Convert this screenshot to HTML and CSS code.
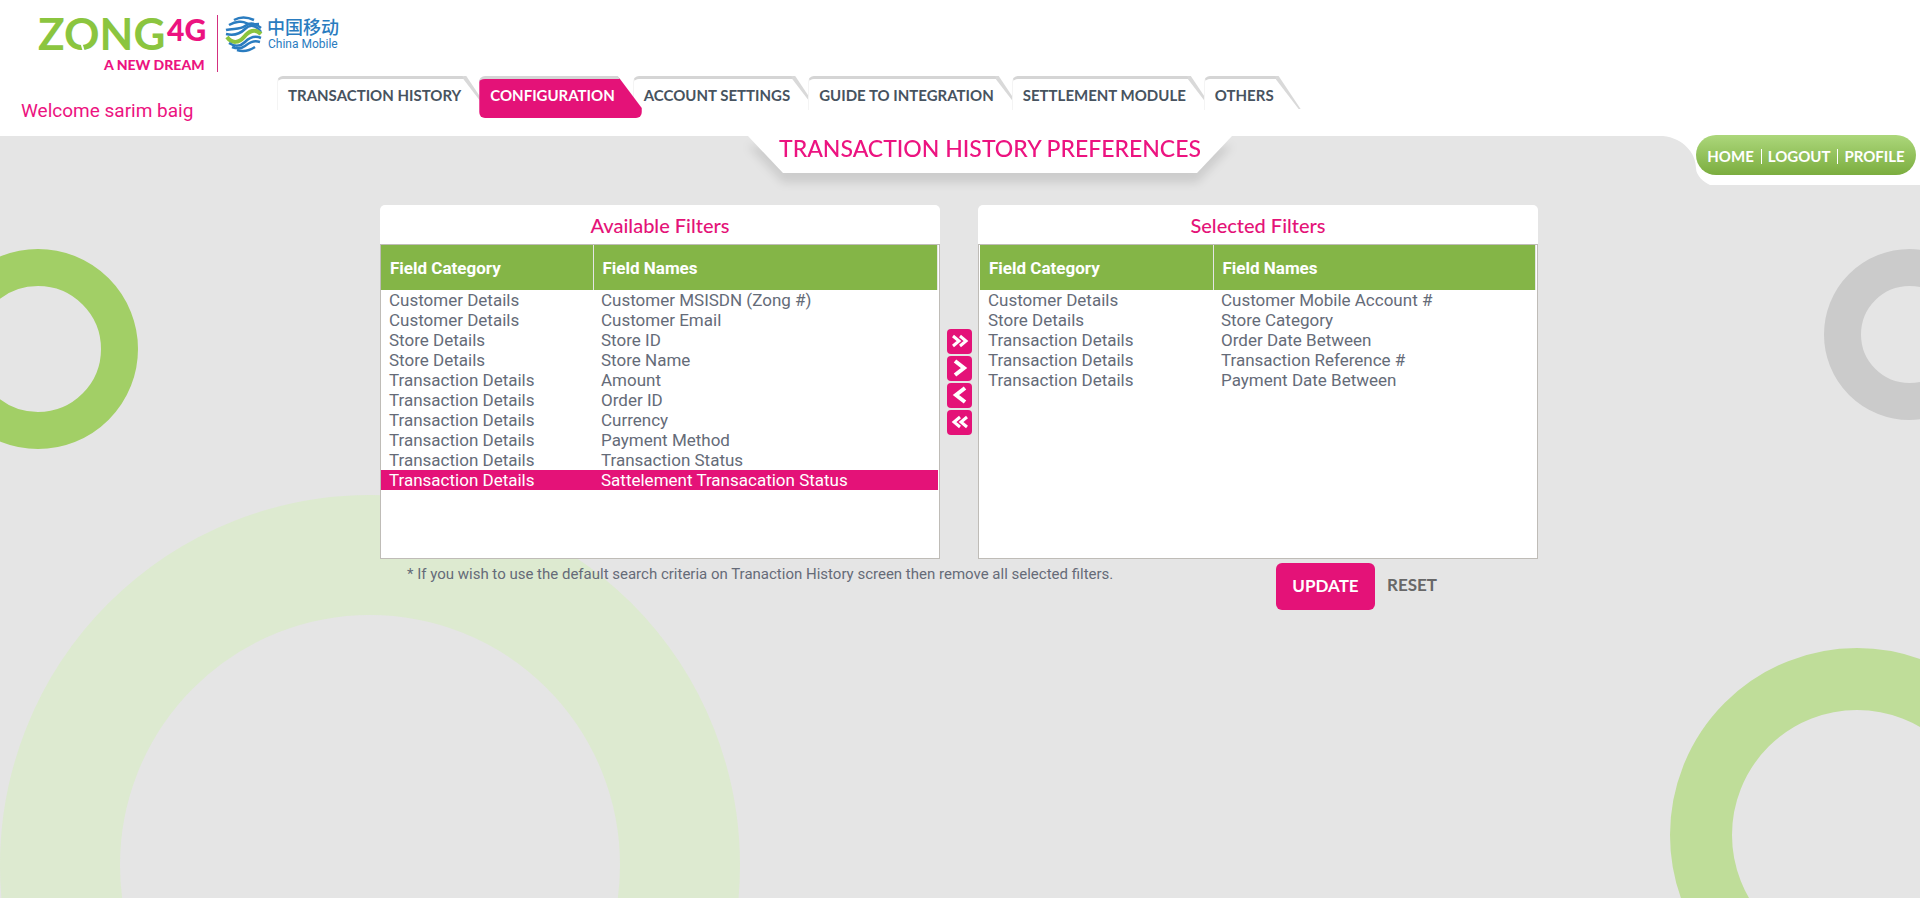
FILE: index.html
```html
<!DOCTYPE html>
<html lang="en">
<head>
<meta charset="utf-8">
<title>Transaction History Preferences</title>
<link rel="stylesheet" href="styles.css">
</head>
<body>
<header class="header">
  <div class="brand">
    <svg class="logo" width="330" height="80" viewBox="0 0 330 80" role="img" aria-label="Zong 4G, A New Dream, China Mobile">
      <text class="logo-zong" x="28" y="50" font-size="44">ZONG</text>
      <path d="M71 42l3 10" stroke="#fff" stroke-width="2"/>
      <text class="logo-pink" x="157" y="41" font-size="30">4G</text>
      <text class="logo-pink" x="94" y="70" font-size="14">A NEW DREAM</text>
      <path d="M207.500 15v57" stroke="#d3307f" stroke-width="1"/>
      <g fill="none" stroke-width="2.500">
        <path stroke="#2a7cc0" d="M224 20q9-5 20 0"/>
        <path stroke="#2a7cc0" d="M219 25c7-4 14-4 17-2s8 1 13 1"/>
        <path stroke="#2a7cc0" d="M216 30c7-2 14 0 19-4s10-3 16 2"/>
        <path stroke="#2a7cc0" d="M216 34c8 2 14 0 19-5s11-4 16 3"/>
        <path stroke="#8bc43f" stroke-width="4" d="M217 37c5 7 12 6 17 0s11-9 17-3"/>
        <path stroke="#2a7cc0" d="M251 38c-7-3-12 0-16 4s-10 5-16 1M250 42c-7-2-11 1-15 4s-8 3-13 1M245 47c-6 4-12 5-18 3"/>
      </g>
      <text class="logo-cn" x="257" y="34" font-size="18">中国移动</text>
      <text class="logo-blue" x="258" y="48" font-size="12">China Mobile</text>
    </svg>
    <p class="welcome">Welcome sarim baig</p>
  </div>
  <nav class="tabs" aria-label="Main">
    <a class="tab" href="#">TRANSACTION HISTORY</a>
    <a class="tab tab-active" href="#" aria-current="page">CONFIGURATION</a>
    <a class="tab" href="#">ACCOUNT SETTINGS</a>
    <a class="tab" href="#">GUIDE TO INTEGRATION</a>
    <a class="tab" href="#">SETTLEMENT MODULE</a>
    <a class="tab" href="#">OTHERS</a>
  </nav>
</header>
<main class="main">
  <div class="rings" aria-hidden="true">
    <span class="ring ring-left"></span>
    <span class="ring ring-big"></span>
    <span class="ring ring-grey"></span>
    <span class="ring ring-corner"></span>
  </div>
  <div class="title-wrap"><h1 class="title">TRANSACTION HISTORY PREFERENCES</h1></div>
  <div class="user">
    <svg class="user-shape" width="257" height="49" viewBox="0 0 257 49" aria-hidden="true"><path fill="#fff" d="M0 0C20 2 33 17 33 32C33 40 41 46 47 49H257V0Z"/></svg>
    <nav class="user-nav" aria-label="Account">
      <a href="#">HOME</a><a href="#">LOGOUT</a><a href="#">PROFILE</a>
    </nav>
  </div>
  <form class="filters">
    <section class="panel">
      <h2 class="panel-title">Available Filters</h2>
      <div class="panel-body">
        <table class="grid">
          <colgroup><col class="col-a"><col></colgroup>
          <thead><tr><th scope="col">Field Category</th><th scope="col">Field Names</th></tr></thead>
          <tbody>
            <tr><td>Customer Details</td><td>Customer MSISDN (Zong #)</td></tr>
            <tr><td>Customer Details</td><td>Customer Email</td></tr>
            <tr><td>Store Details</td><td>Store ID</td></tr>
            <tr><td>Store Details</td><td>Store Name</td></tr>
            <tr><td>Transaction Details</td><td>Amount</td></tr>
            <tr><td>Transaction Details</td><td>Order ID</td></tr>
            <tr><td>Transaction Details</td><td>Currency</td></tr>
            <tr><td>Transaction Details</td><td>Payment Method</td></tr>
            <tr><td>Transaction Details</td><td>Transaction Status</td></tr>
            <tr class="chosen"><td>Transaction Details</td><td>Sattelement Transacation Status</td></tr>
          </tbody>
        </table>
      </div>
    </section>
    <div class="movers">
      <button type="button" class="mover" aria-label="Add all"><svg width="25" height="25" viewBox="0 0 25 25"><path d="M6 7l6 5-6 5M13 7l6 5-6 5"/></svg></button>
      <button type="button" class="mover" aria-label="Add"><svg width="25" height="25" viewBox="0 0 25 25"><path class="thick" d="M8 5l9 7-9 7"/></svg></button>
      <button type="button" class="mover" aria-label="Remove"><svg width="25" height="25" viewBox="0 0 25 25"><path class="thick" d="M18 5l-9 7 9 7"/></svg></button>
      <button type="button" class="mover" aria-label="Remove all"><svg width="25" height="25" viewBox="0 0 25 25"><path d="M13 7l-6 5 6 5M20 7l-6 5 6 5"/></svg></button>
    </div>
    <section class="panel">
      <h2 class="panel-title">Selected Filters</h2>
      <div class="panel-body panel-body-right">
        <table class="grid">
          <colgroup><col class="col-b"><col></colgroup>
          <thead><tr><th scope="col">Field Category</th><th scope="col">Field Names</th></tr></thead>
          <tbody>
            <tr><td>Customer Details</td><td>Customer Mobile Account #</td></tr>
            <tr><td>Store Details</td><td>Store Category</td></tr>
            <tr><td>Transaction Details</td><td>Order Date Between</td></tr>
            <tr><td>Transaction Details</td><td>Transaction Reference #</td></tr>
            <tr><td>Transaction Details</td><td>Payment Date Between</td></tr>
          </tbody>
        </table>
      </div>
    </section>
    <div class="form-foot">
      <p class="note">* If you wish to use the default search criteria on Tranaction History screen then remove all selected filters.</p>
      <div class="actions">
        <button type="submit" class="update">UPDATE</button>
        <button type="reset" class="reset">RESET</button>
      </div>
    </div>
  </form>
</main>
</body>
</html>
```

FILE: styles.css
```css
* { box-sizing: border-box; }
body {
  margin: 0;
  min-height: 100vh;
  display: flex;
  flex-direction: column;
  background: #fff;
  color: #656b78;
  font-family: Roboto, "Noto Sans", sans-serif;
  font-size: 17px;
}
a { color: inherit; text-decoration: none; }
h1, h2, p { margin: 0; }
button { border: 0; padding: 0; cursor: pointer; font-family: Lato, sans-serif; }

.header { display: flex; height: 136px; }
.brand { flex: none; width: 277px; padding-left: 10px; }
.logo { display: block; overflow: visible; }
.logo text { font-family: Lato, sans-serif; }
.logo-zong { fill: #8bc53f; font-weight: 700; }
.logo-pink { fill: #ec1380; font-weight: 900; }
.logo .logo-cn { fill: #2a7cc0; font-family: "Noto Sans CJK SC", sans-serif; font-weight: 500; }
.logo .logo-blue { fill: #2a7cc0; font-family: Roboto, sans-serif; }
.welcome { margin: 18px 0 0 11px; color: #ec1380; font-size: 19px; line-height: 26px; }

.tabs { display: flex; padding-top: 76px; font: 700 15px/20px Lato, sans-serif; color: #47535f; }
.tab { position: relative; height: 42px; padding: 9px 18px 0 11px; white-space: nowrap; }
.tab::before {
  content: "";
  position: absolute;
  inset: 0 14px 8px 0;
  z-index: -2;
  border-top: 3px solid #d5d5d5;
  border-left: 1px solid #f4f4f4;
  border-radius: 6px 3px 0 0;
  background: #fff;
}
.tab::after {
  content: "";
  position: absolute;
  top: 0;
  right: -9px;
  z-index: -2;
  width: 25px;
  height: 33px;
  background: #d9d9d9;
  clip-path: polygon(0 0, 3px 0, 100% 100%, 23px 100%, 0 3px);
}
.tab-active { color: #fff; }
.tab-active::before {
  inset: 0 -9px 0 0;
  z-index: -1;
  border-top: 3px solid #d5d5d5;
  border-left: 0;
  border-radius: 6px;
  background: #e41278;
  clip-path: polygon(0 0, calc(100% - 24px) 0, 100% 32px, 100% 100%, 0 100%);
}
.tab-active::after { display: none; }

.main { position: relative; flex: 1; background: #e5e5e5; margin-bottom: 1px; padding-bottom: 40px; }
.rings { position: absolute; inset: 0; overflow: hidden; }
.ring { position: absolute; border: solid; border-radius: 50%; }
.ring-left { left: -62px; top: 113px; width: 200px; height: 200px; border-width: 37px; border-color: #a2cf66; }
.ring-big { left: 0; top: 359px; width: 740px; height: 740px; border-width: 120px; border-color: #ddead0; }
.ring-grey { right: -75px; top: 113px; width: 171px; height: 171px; border-width: 37px; border-color: #cbcbcb; }
.ring-corner { right: -124px; top: 512px; width: 374px; height: 374px; border-width: 62px; border-color: #bfdd99; }

.title-wrap {
  position: relative;
  display: flex;
  justify-content: center;
  padding-left: 60px;
  filter: drop-shadow(0 10px 4px rgba(0, 0, 0, 0.1));
}
.title {
  width: 484px;
  height: 37px;
  background: #fff;
  clip-path: polygon(0 0, 100% 0, 449px 100%, 35px 100%);
  color: #ec1380;
  font: 500 23px/24px Lato, sans-serif;
  text-align: center;
}

.user { position: absolute; top: 0; right: 0; width: 257px; height: 49px; }
.user-shape { display: block; }
.user-nav {
  position: absolute;
  top: -1px;
  right: 4px;
  display: flex;
  align-items: center;
  justify-content: center;
  width: 220px;
  height: 40px;
  padding-top: 2px;
  border-radius: 20px;
  background: linear-gradient(#acd77b, #7bad3f);
  color: #fff;
  font: 700 15px/15px Lato, sans-serif;
}
.user-nav a + a { margin-left: 7px; padding-left: 6px; border-left: 1px solid #fff; }

.filters {
  position: relative;
  display: grid;
  grid-template-columns: 560px 38px 560px;
  justify-content: center;
  margin-top: 32px;
  padding-right: 2px;
}
.panel-title {
  height: 39px;
  border-radius: 5px 5px 0 0;
  background: #fff;
  color: #e41278;
  font: 500 20px/40px Lato, sans-serif;
  text-align: center;
}
.panel-body { min-height: 315px; padding-right: 1px; border: 1px solid #bfbcb7; background: #fff; }
.panel-body-right { padding-left: 1px; }
.grid { width: 100%; border-collapse: collapse; table-layout: fixed; line-height: 20px; }
.col-a { width: 212px; }
.col-b { width: 233px; }
.grid th {
  height: 45px;
  padding: 0 9px;
  background: #84b547;
  border-right: 1px solid #e5e5e5;
  color: #fff;
  font-weight: 700;
  text-align: left;
}
.grid td { padding: 0 8px; }
.chosen { background: #e41278; color: #fff; }

.movers { display: flex; flex-direction: column; align-items: center; gap: 2px; padding: 124px 0 0 1px; }
.mover { width: 25px; height: 25px; border-radius: 4px; background: #e41278; }
.mover svg { display: block; fill: none; stroke: #fff; stroke-width: 3; }
.mover .thick { stroke-width: 4; }

.form-foot { grid-column: 1 / -1; display: flex; justify-content: space-between; padding: 4px 101px 0 27px; }
.note { font-size: 15px; line-height: 22px; }
.actions { display: flex; align-items: flex-start; gap: 12px; }
.update { width: 99px; height: 47px; padding-bottom: 2px; border-radius: 6px; background: #e41278; color: #fff; font-size: 17px; font-weight: 700; }
.reset { height: 44px; padding-bottom: 2px; background: none; color: #686868; font-size: 17px; font-weight: 700; }
```
